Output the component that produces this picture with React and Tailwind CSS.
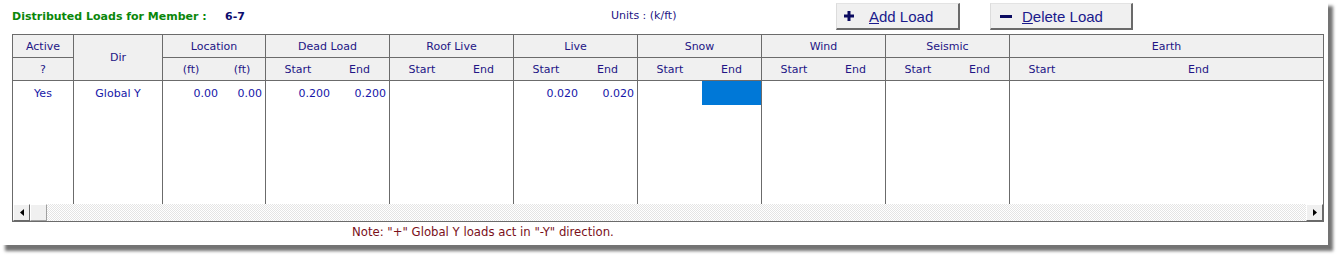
import React from 'react';

const HEAD = 'text-[#231585]';
const VAL = 'text-[#1616a8]';

const groups = [
  { name: 'Dead Load', start: '0.200', end: '0.200' },
  { name: 'Roof Live' },
  { name: 'Live', start: '0.020', end: '0.020' },
  { name: 'Snow', selected: true },
  { name: 'Wind' },
  { name: 'Seismic' },
];

function Arrow({ dir }) {
  return (
    <div className="w-[17px] h-[17px] bg-[#f0f0f0] border-t border-l border-t-white border-l-white border-r border-b border-r-[#696969] border-b-[#696969] flex items-center justify-center">
      <svg width="4" height="7" viewBox="0 0 4 7">
        {dir === 'left' ? <path d="M4 0 L0 3.5 L4 7 Z" fill="#000" /> : <path d="M0 0 L4 3.5 L0 7 Z" fill="#000" />}
      </svg>
    </div>
  );
}

function Group({ g }) {
  return (
    <div className="w-[124px] shrink-0 flex flex-col border-r border-[#6b6b6b]">
      <div className={`h-[23px] bg-[#f0f0f0] border-b border-[#6b6b6b] flex items-center justify-center ${HEAD}`}>{g.name}</div>
      <div className={`h-[23px] bg-[#f0f0f0] border-b border-[#6b6b6b] flex items-center ${HEAD}`}>
        <span className="w-[64px] text-center">Start</span>
        <span className="flex-1 text-center">End</span>
      </div>
      <div className="flex-1 bg-white">
        <div className={`h-[24px] flex items-center ${VAL}`}>
          <span className="w-[64px] text-right">{g.start || ''}</span>
          <span className={`flex-1 h-full flex items-center justify-end pr-[3px] ${g.selected ? 'bg-[#0078d7]' : ''}`}>{g.end || ''}</span>
        </div>
      </div>
    </div>
  );
}

export default function App() {
  return (
    <div className="w-[1343px] h-[261px] bg-white font-['DejaVu_Sans',Verdana,sans-serif] text-[11px] leading-none">
      <div className="w-[1328px] h-[245px] bg-white shadow-[5px_6px_3px_rgba(0,0,0,0.55)] flex flex-col">
        {/* top bar */}
        <div className="h-[34px] flex items-start pl-[12px]">
          <span className="w-[213px] mt-[11px] font-bold text-[#0a870a]">Distributed Loads for Member :</span>
          <span className="w-[386px] mt-[11px] font-bold text-[#0c0c6e]">6-7</span>
          <span className={`w-[225px] mt-[10px] ${HEAD}`}>Units : (k/ft)</span>
          <button className="w-[124px] h-[27px] mt-[3px] bg-[#f0f0f0] border-t border-l border-t-[#e3e3e3] border-l-[#dcdcdc] border-r-2 border-b-2 border-r-[#6a6a6a] border-b-[#6a6a6a] flex items-center pl-[7px] text-[14px] font-['Liberation_Sans',Arial,sans-serif] text-[#1a1a8c]">
            <svg width="10" height="10" viewBox="0 0 10 10" className="mr-[15px]">
              <path d="M3.5 0 H6.5 V3.5 H10 V6.5 H6.5 V10 H3.5 V6.5 H0 V3.5 H3.5 Z" fill="#0b0b60" />
            </svg>
            <span className="text-[15px]"><u>A</u>dd Load</span>
          </button>
          <button className="w-[143px] h-[27px] mt-[3px] ml-[30px] bg-[#f0f0f0] border-t border-l border-t-[#e3e3e3] border-l-[#dcdcdc] border-r-2 border-b-2 border-r-[#6a6a6a] border-b-[#6a6a6a] flex items-center pl-[9px] font-['Liberation_Sans',Arial,sans-serif] text-[#1a1a8c]">
            <span className="w-[12px] h-[3px] bg-[#0b0b60] mr-[10px]" />
            <span className="text-[15px]"><u>D</u>elete Load</span>
          </button>
        </div>

        {/* table */}
        <div className="ml-[12px] w-[1312px] h-[188px] border border-[#6b6b6b] flex flex-col">
          <div className="h-[170px] flex">
            {/* Active */}
            <div className="w-[61px] shrink-0 flex flex-col border-r border-[#6b6b6b]">
              <div className={`h-[23px] bg-[#f0f0f0] border-b border-[#6b6b6b] flex items-center justify-center ${HEAD}`}>Active</div>
              <div className={`h-[23px] bg-[#f0f0f0] border-b border-[#6b6b6b] flex items-center justify-center ${HEAD}`}>?</div>
              <div className={`h-[24px] flex items-center justify-center ${VAL}`}>Yes</div>
            </div>
            {/* Dir */}
            <div className="w-[89px] shrink-0 flex flex-col border-r border-[#6b6b6b]">
              <div className={`h-[46px] bg-[#f0f0f0] border-b border-[#6b6b6b] flex items-center justify-center ${HEAD}`}>Dir</div>
              <div className={`h-[24px] flex items-center justify-center ${VAL}`}>Global Y</div>
            </div>
            {/* Location */}
            <div className="w-[103px] shrink-0 flex flex-col border-r border-[#6b6b6b]">
              <div className={`h-[23px] bg-[#f0f0f0] border-b border-[#6b6b6b] flex items-center justify-center ${HEAD}`}>Location</div>
              <div className={`h-[23px] bg-[#f0f0f0] border-b border-[#6b6b6b] flex items-center ${HEAD}`}>
                <span className="w-[56px] text-center">(ft)</span>
                <span className="flex-1 text-center">(ft)</span>
              </div>
              <div className={`h-[24px] flex items-center ${VAL}`}>
                <span className="w-[56px] text-right pr-[1px]">0.00</span>
                <span className="flex-1 text-right pr-[3px]">0.00</span>
              </div>
            </div>
            {groups.map((g) => <Group key={g.name} g={g} />)}
            {/* Earth */}
            <div className="flex-1 flex flex-col">
              <div className={`h-[23px] bg-[#f0f0f0] border-b border-[#6b6b6b] flex items-center justify-center ${HEAD}`}>Earth</div>
              <div className={`h-[23px] bg-[#f0f0f0] border-b border-[#6b6b6b] flex items-center ${HEAD}`}>
                <span className="w-[64px] text-center">Start</span>
                <span className="flex-1 text-center">End</span>
              </div>
            </div>
          </div>
          {/* scrollbar */}
          <div className="h-[17px] flex bg-[repeating-conic-gradient(#e4e4e4_0%_25%,#ffffff_0%_50%)] bg-[length:2px_2px]">
            <Arrow dir="left" />
            <div className="w-[17px] h-[17px] bg-[#f0f0f0] border-t border-l border-t-white border-l-white border-r border-b border-r-[#a0a0a0] border-b-[#a0a0a0]" />
            <div className="flex-1" />
            <Arrow dir="right" />
          </div>
        </div>

        <div className="pl-[352px] mt-[5px] text-[11.7px] text-[#7a0f1a]">Note: "+" Global Y loads act in "-Y" direction.</div>
      </div>
    </div>
  );
}
